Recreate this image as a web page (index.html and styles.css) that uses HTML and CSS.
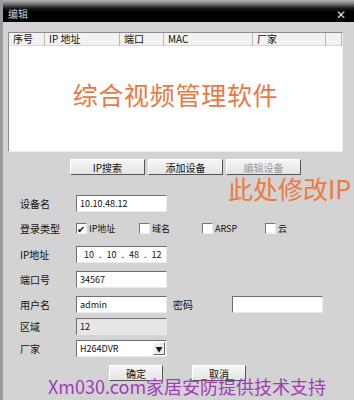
FILE: index.html
```html
<!DOCTYPE html>
<html lang="zh-CN">
<head>
    <meta charset="UTF-8" />
    <title>编辑</title>
    <link rel="stylesheet" href="styles.css">
</head>
<body>
    <div class="window">
        <div class="titlebar">
            <span class="title">编辑</span>
            <span class="close">✕</span>
        </div>

        <div class="content">
            <!-- device list -->
            <div class="list">
                <div class="list-head">
                    <div class="col c1">序号</div>
                    <div class="col c2">IP 地址</div>
                    <div class="col c3">端口</div>
                    <div class="col c4">MAC</div>
                    <div class="col c5">厂家</div>
                    <div class="col c6"></div>
                </div>
                <div class="list-body">
                    <div class="banner">综合视频管理软件</div>
                </div>
            </div>

            <div class="tools">
                <button class="btn wide">IP搜索</button>
                <button class="btn wide">添加设备</button>
                <button class="btn wide" disabled>编辑设备</button>
            </div>

            <div class="note">此处修改IP</div>

            <!-- edit form -->
            <div class="form">
                <div class="row">
                    <label class="lbl">设备名</label>
                    <div class="field">10.10.48.12</div>
                </div>
                <div class="row row-check">
                    <label class="lbl">登录类型</label>
                    <div class="checks">
                        <span class="check"><i class="box on"></i>IP地址</span>
                        <span class="check"><i class="box"></i>域名</span>
                        <span class="check"><i class="box"></i>ARSP</span>
                        <span class="check"><i class="box"></i>云</span>
                    </div>
                </div>
                <div class="row">
                    <label class="lbl">IP地址</label>
                    <div class="field ip"><span>10</span><span>.</span><span>10</span><span>.</span><span>48</span><span>.</span><span>12</span></div>
                </div>
                <div class="row">
                    <label class="lbl">端口号</label>
                    <div class="field">34567</div>
                </div>
                <div class="row tight">
                    <label class="lbl">用户名</label>
                    <div class="field">admin</div>
                    <label class="lbl2">密码</label>
                    <div class="field"></div>
                </div>
                <div class="row tight">
                    <label class="lbl">区域</label>
                    <div class="field off">12</div>
                </div>
                <div class="row tight">
                    <label class="lbl">厂家</label>
                    <div class="field select">H264DVR<span class="arrow">▼</span></div>
                </div>
            </div>

            <div class="actions">
                <button class="btn">确定</button>
                <button class="btn">取消</button>
            </div>
        </div>

        <div class="footer-note">Xm030.com家居安防提供技术支持</div>
    </div>
</body>
</html>
```

FILE: styles.css
```css
* {
    margin: 0;
    padding: 0;
    box-sizing: border-box;
}

body {
    width: 354px;
    height: 400px;
    overflow: hidden;
    font-family: "Noto Sans CJK SC", "Liberation Sans", sans-serif;
    font-size: 10px;
    color: #111;
    background: #d3d3d3;
}

.window {
    position: relative;
    height: 400px;
    border-left: 3px solid #9a9a9a;
}

/* Title bar */
.titlebar {
    height: 22px;
    display: flex;
    align-items: center;
    justify-content: space-between;
    padding: 4px 8px 0 5px;
    background: linear-gradient(#b4b4b4 0, #777 4px, #1a1a1a 8px, #000 12px, #000 100%);
    color: #cfcfcf;
}

.title {
    font-size: 10px;
}

.close {
    font-size: 12px;
    color: #ddd;
}

.content {
    padding: 10px 0 0 5px;
}

/* Device list */
.list {
    width: 335px;
    height: 120px;
    border: 1px solid #8a8a8a;
    border-right-color: #eee;
    border-bottom-color: #eee;
    background: #fff;
}

.list-head {
    display: flex;
    height: 13px;
    background: #f2f2f2;
    border-bottom: 1px solid #d6d6d6;
}

.col {
    height: 13px;
    line-height: 12px;
    padding-left: 4px;
    border-right: 1px solid #b8b8b8;
    font-size: 10px;
}

.c1 { width: 36px; }
.c2 { width: 75px; }
.c3 { width: 44px; }
.c4 { width: 89px; }
.c5 { width: 73px; }
.c6 { width: 16px; }

.list-body {
    display: flex;
    justify-content: center;
    padding-top: 33px;
}

.banner {
    font-size: 25px;
    line-height: 30px;
    color: #ea7844;
    letter-spacing: 0.7px;
}

/* Buttons */
.tools {
    display: flex;
    gap: 3px;
    margin-top: 7px;
    padding-left: 62px;
}

.btn {
    height: 16px;
    width: 54px;
    font-family: inherit;
    font-size: 10px;
    line-height: 13px;
    color: #111;
    background: linear-gradient(#f6f6f6, #e4e4e4);
    border: 1px solid;
    border-color: #fff #555 #555 #fff;
}

.btn.wide {
    width: 75px;
}

.btn:disabled {
    color: #9a9a9a;
}

.note {
    position: absolute;
    left: 225px;
    top: 176px;
    font-size: 25px;
    line-height: 25px;
    color: #ee7a3e;
    white-space: nowrap;
}

/* Form */
.form {
    margin-top: 20px;
    padding-left: 12px;
}

.row {
    display: flex;
    align-items: center;
    height: 17px;
    margin-bottom: 8px;
}

.row.tight {
    margin-bottom: 5px;
}

.row-check {
    margin-top: 1px;
    margin-bottom: 9px;
}

.lbl {
    width: 56px;
    font-size: 10px;
}

.lbl2 {
    width: 65px;
    padding-left: 6px;
    font-size: 10px;
}

.field {
    width: 91px;
    height: 17px;
    line-height: 15px;
    padding-left: 3px;
    font-size: 9px;
    background: #fff;
    border: 1px solid;
    border-color: #6e6e6e #eaeaea #eaeaea #6e6e6e;
    overflow: hidden;
    white-space: nowrap;
}

.field.off {
    background: #e6e6e6;
}

.field.ip {
    display: flex;
    gap: 5px;
    padding-left: 7px;
}

.field.select {
    position: relative;
    font-size: 9px;
}

.arrow {
    position: absolute;
    right: 1px;
    top: 1px;
    width: 12px;
    height: 13px;
    line-height: 13px;
    text-align: center;
    font-size: 7px;
    background: #eee;
    border: 1px solid;
    border-color: #fff #666 #666 #fff;
}

.checks {
    display: flex;
}

.check {
    display: flex;
    align-items: center;
    width: 63px;
    font-size: 9px;
}

.box {
    width: 11px;
    height: 11px;
    margin-right: 2px;
    background: #fff;
    border: 1px solid;
    border-color: #777 #eee #eee #777;
    position: relative;
}

.box.on::after {
    content: "✔";
    position: absolute;
    left: 0;
    top: -3px;
    font-size: 10px;
    font-style: normal;
    color: #111;
}

.actions {
    display: flex;
    gap: 29px;
    margin-top: 8px;
    padding-left: 101px;
}

.footer-note {
    position: absolute;
    left: 45px;
    top: 375px;
    font-size: 18px;
    line-height: 22px;
    color: #a03cb8;
    white-space: nowrap;
}
```
